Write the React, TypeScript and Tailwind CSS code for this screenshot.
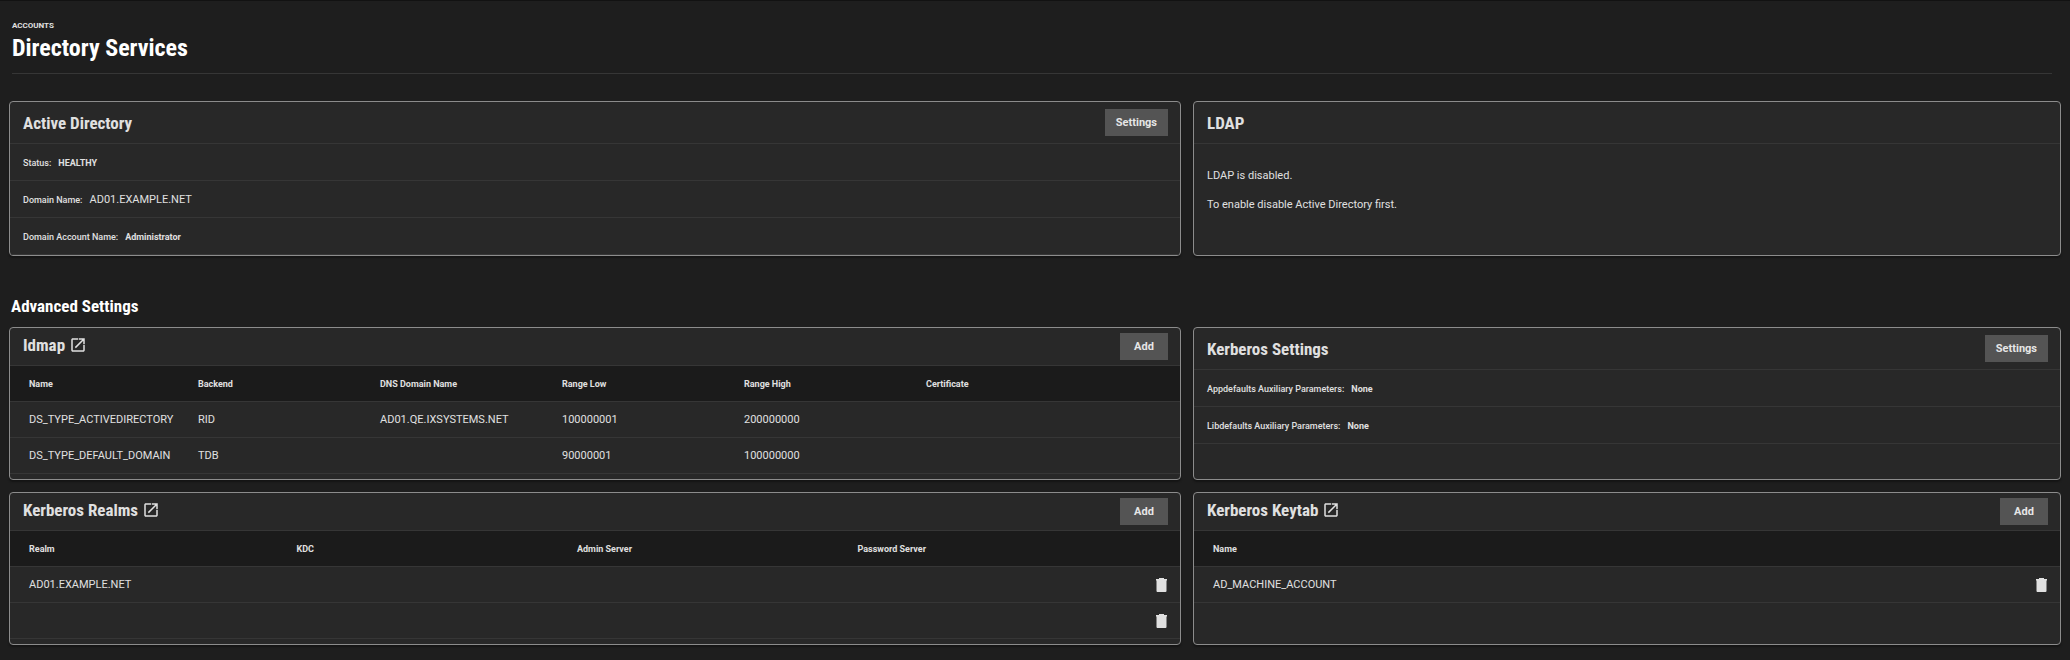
import type { ReactNode } from "react";

function Card({ children }: { children: ReactNode }) {
  return (
    <section className="overflow-hidden rounded-[4px] border border-[#8c8c8c] bg-[#282828] shadow-[0_2px_2px_rgba(0,0,0,0.35)]">
      {children}
    </section>
  );
}

function CardHeader({ title, href, action, compact }: { title: string; href?: string; action?: string; compact?: boolean }) {
  return (
    <header className={`flex items-center justify-between border-b border-[#363636] pr-3 pl-[13px] ${compact ? "h-[38px]" : "h-[42px]"}`}>
      <h3 className={`flex items-center gap-1 font-['Roboto_Condensed','Roboto',sans-serif] text-[17px] leading-6 font-bold text-[#e0e0e0] ${compact ? "pb-[3px]" : ""}`}>
        {title}
        {href && (
          <a href={href} aria-label={`Open ${title}`}>
            <OpenIcon />
          </a>
        )}
      </h3>
      {action && (
        <button type="button" className="h-[27px] min-w-12 bg-[#545454] px-[11px] text-[11px] leading-4 font-bold text-[#e6e6e6]">
          {action}
        </button>
      )}
    </header>
  );
}

function OpenIcon() {
  return (
    <svg viewBox="0 0 24 24" className="size-[18px] fill-current" aria-hidden="true">
      <path d="M19 19H5V5h7V3H5c-1.11 0-2 .9-2 2v14c0 1.1.89 2 2 2h14c1.1 0 2-.9 2-2v-7h-2v7zM13 3v2h4.59l-9.83 9.83 1.41 1.41L19 6.41V11h2V3h-8z" />
    </svg>
  );
}

function TrashIcon() {
  return (
    <svg viewBox="0 0 18 18" className="size-[18px] fill-current" aria-hidden="true">
      <path d="M7 2h5v1h3v1.5h-.5V15a1 1 0 0 1-1 1h-8a1 1 0 0 1-1-1V4.500H4V3h3z" />
    </svg>
  );
}

function InfoRow({ label, value, large }: { label: string; value: string; large?: boolean }) {
  return (
    <div className="flex h-[37px] items-center gap-[7px] border-b border-[#363636] px-[13px] pt-[2px] text-[9px] leading-4">
      <dt className="font-medium">{label}</dt>
      <dd className={large ? "text-[11px]" : "font-bold"}>{value}</dd>
    </div>
  );
}

function DataTable({ label, columns, rows, removable, actionWidth }: { label: string; columns: string[]; rows: string[][]; removable?: boolean; actionWidth: string }) {
  return (
    <table aria-label={label} className="w-full table-fixed border-separate border-spacing-0 text-left">
      <thead className="bg-[#1b1b1b] text-[9px] leading-4">
        <tr className="h-9">
          {columns.map((c) => (
            <th key={c} className="border-b border-[#363636] p-0 pl-[6px] font-bold first:pl-[19px]">{c}</th>
          ))}
          <th className={`border-b border-[#363636] p-0 ${actionWidth}`} />
        </tr>
      </thead>
      <tbody className="text-[11px] leading-4">
        {rows.map((row, r) => (
          <tr key={r} className="h-9">
            {row.map((cell, i) => (
              <td key={i} className="border-b border-[#363636] p-0 pl-[6px] first:pl-[19px]">{cell}</td>
            ))}
            <td className="border-b border-[#363636] p-0 pr-[10px]">
              {removable && (
                <button type="button" aria-label="Delete" className="ml-auto block">
                  <TrashIcon />
                </button>
              )}
            </td>
          </tr>
        ))}
      </tbody>
    </table>
  );
}

export default function App() {
  return (
    <main className="min-h-screen border-t border-[#121212] bg-[#1e1e1e] px-[9px] pb-[15px] font-['Roboto',sans-serif] text-[#e0e0e0]">
      <header className="mr-[9px] ml-[3px] border-b border-[#363636] pt-[17px] pb-[11px]">
        <p className="text-[8px] leading-4 font-bold">ACCOUNTS</p>
        <h1 className="font-['Roboto_Condensed','Roboto',sans-serif] text-[24px] leading-7 font-bold text-white">Directory Services</h1>
      </header>

      <div className="mt-[27px] grid grid-cols-[1172fr_868fr] gap-3">
        <Card>
          <CardHeader title="Active Directory" action="Settings" />
          <dl>
            <InfoRow label="Status:" value="HEALTHY" />
            <InfoRow label="Domain Name:" value="AD01.EXAMPLE.NET" large />
            <InfoRow label="Domain Account Name:" value="Administrator" />
          </dl>
        </Card>
        <Card>
          <CardHeader title="LDAP" />
          <div className="space-y-3 px-[13px] pt-[23px] text-[11px] leading-[17px]">
            <p>LDAP is disabled.</p>
            <p>To enable disable Active Directory first.</p>
          </div>
        </Card>
      </div>

      <h2 className="mt-[38px] mb-[9px] ml-[2px] font-['Roboto_Condensed','Roboto',sans-serif] text-[17px] leading-6 font-bold text-white">Advanced Settings</h2>

      <div className="grid grid-cols-[1172fr_868fr] gap-3">
        <Card>
          <CardHeader title="Idmap" href="#idmap" action="Add" compact />
          <div className="pb-[5px]">
            <DataTable
              label="Idmap"
              actionWidth="w-[78px]"
              columns={["Name", "Backend", "DNS Domain Name", "Range Low", "Range High", "Certificate"]}
              rows={[
                ["DS_TYPE_ACTIVEDIRECTORY", "RID", "AD01.QE.IXSYSTEMS.NET", "100000001", "200000000", ""],
                ["DS_TYPE_DEFAULT_DOMAIN", "TDB", "", "90000001", "100000000", ""],
              ]}
            />
          </div>
        </Card>
        <Card>
          <CardHeader title="Kerberos Settings" action="Settings" />
          <dl>
            <InfoRow label="Appdefaults Auxiliary Parameters:" value="None" />
            <InfoRow label="Libdefaults Auxiliary Parameters:" value="None" />
          </dl>
        </Card>
        <Card>
          <CardHeader title="Kerberos Realms" href="#realms" action="Add" compact />
          <div className="pb-[5px]">
            <DataTable
              label="Kerberos Realms"
              actionWidth="w-12"
              columns={["Realm", "KDC", "Admin Server", "Password Server"]}
              rows={[["AD01.EXAMPLE.NET", "", "", ""], ["", "", "", ""]]}
              removable
            />
          </div>
        </Card>
        <Card>
          <CardHeader title="Kerberos Keytab" href="#keytab" action="Add" compact />
          <DataTable label="Kerberos Keytab" actionWidth="w-12" columns={["Name"]} rows={[["AD_MACHINE_ACCOUNT"]]} removable />
        </Card>
      </div>
    </main>
  );
}
